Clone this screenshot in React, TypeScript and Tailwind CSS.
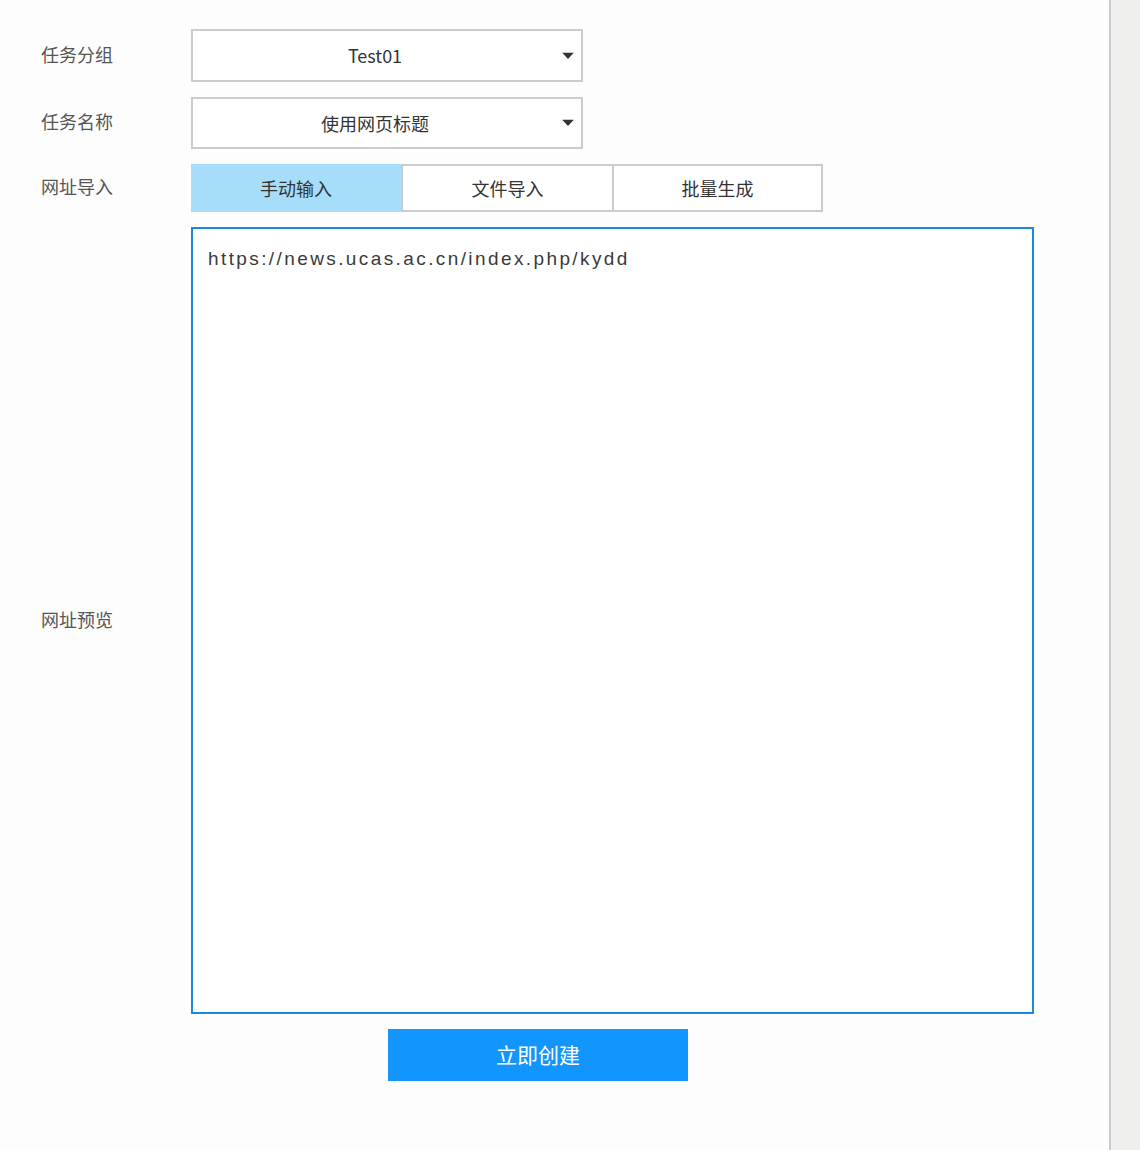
import React from "react";

const cjk = { fontFamily: '"Noto Sans CJK SC", "Noto Sans", sans-serif' };

function Caret() {
  return (
    <svg width="12" height="7" viewBox="0 0 12 7" className="absolute right-[7px] top-1/2 -translate-y-1/2">
      <path d="M0 0 L12 0 L6 6.5 Z" fill="#333" />
    </svg>
  );
}

function Select({ value, tall = false }: { value: string; tall?: boolean }) {
  return (
    <div
      className={
        "relative flex w-[392px] items-center justify-center border-2 border-[#cccccc] bg-white pr-[24px] text-[18px] text-[#333] " +
        (tall ? "h-[53px]" : "h-[52px]")
      }
    >
      <span>{value}</span>
      <Caret />
    </div>
  );
}

function Row({ label, children }: { label: string; children: React.ReactNode }) {
  return (
    <div className="flex items-center">
      <div className="w-[150px] shrink-0 pb-[3px] text-[18px] text-[#555]">{label}</div>
      {children}
    </div>
  );
}

export default function App() {
  const url = "https://news.ucas.ac.cn/index.php/kydd";

  return (
    <div className="flex h-[1150px] w-full bg-[#fdfdfd]" style={cjk}>
      <div className="flex flex-1 flex-col gap-[15px] pl-[41px] pt-[29px]">
        <Row label="任务分组">
          <Select value="Test01" tall />
        </Row>
        <Row label="任务名称">
          <Select value="使用网页标题" />
        </Row>
        <Row label="网址导入">
          <div className="flex h-[48px] text-[18px] text-[#333]">
            <div className="flex w-[210px] items-center justify-center bg-[#a6ddf8]">手动输入</div>
            <div className="flex w-[213px] items-center justify-center border-2 border-[#cccccc] bg-white">文件导入</div>
            <div className="flex w-[209px] items-center justify-center border-2 border-l-0 border-[#cccccc] bg-white">批量生成</div>
          </div>
        </Row>
        <Row label="网址预览">
          <div className="h-[787px] w-[843px] border-2 border-[#1a88dc] bg-white px-[15px] pt-[18px]">
            <div
              className="text-[19px] leading-[24px] tracking-[2.4px] text-[#3a3a3a]"
              style={{ fontFamily: '"Liberation Sans", Arial, sans-serif' }}
            >
              {url}
            </div>
          </div>
        </Row>
        <div className="ml-[347px]">
          <button className="flex h-[52px] w-[300px] items-center justify-center bg-[#1296fe] text-[21px] text-white">
            立即创建
          </button>
        </div>
      </div>
      <div className="w-[31px] shrink-0 border-l-2 border-[#cccccc] bg-[#efefee]" />
    </div>
  );
}
